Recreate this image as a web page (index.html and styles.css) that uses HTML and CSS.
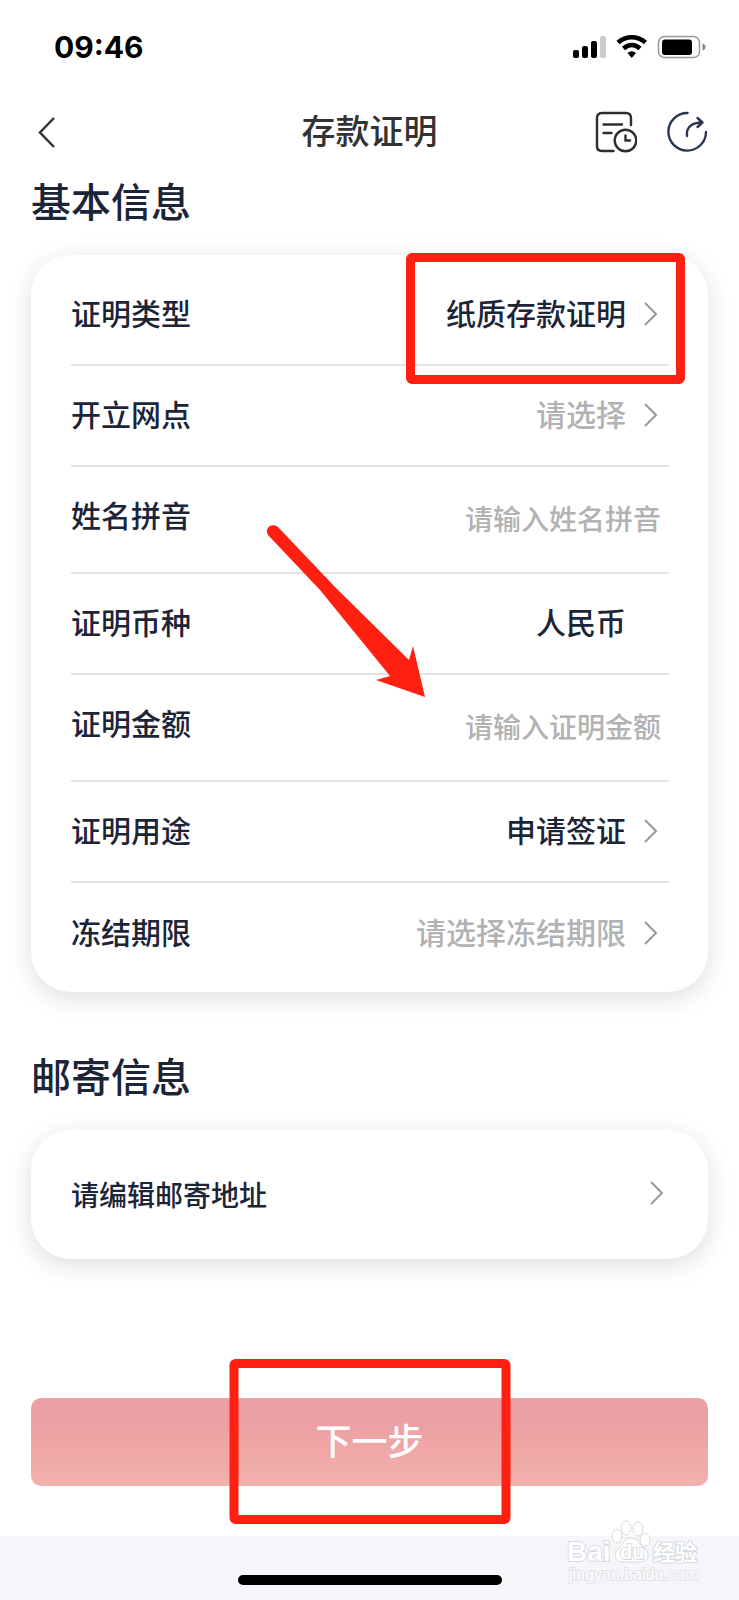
FILE: index.html
```html
<!DOCTYPE html>
<html lang="zh-CN">
<head>
  <meta charset="UTF-8" />
  <title>存款证明</title>
  <meta name="viewport" content="width=device-width, initial-scale=1" />
  <link rel="stylesheet" href="styles.css">
</head>
<body>
  <div class="status-bar">
    <span class="status-time">09:46</span>
    <svg class="status-icons" width="134" height="26" viewBox="0 0 134 26" aria-hidden="true">
      <rect x="1" y="16" width="6" height="8" rx="2"></rect>
      <rect x="10" y="12" width="6" height="12" rx="2"></rect>
      <rect x="19" y="7" width="6" height="17" rx="2"></rect>
      <rect x="28" y="2" width="6" height="22" rx="2" fill="#ccc"></rect>
      <path d="M46 8.500C54 1.500 65.500 1.500 73.500 8.500M51.500 14.500C56.500 10 63 10 68 14.500" fill="none" stroke="#000" stroke-width="4.600"></path>
      <path d="M55.500 19Q59.750 15.500 64 19L59.750 24Z"></path>
      <rect x="86.500" y="2.500" width="41" height="21" rx="6" fill="none" stroke="#999" stroke-width="1.500"></rect>
      <rect x="90" y="5.500" width="30" height="15.500" rx="3"></rect>
      <path d="M130.500 9.500Q133.500 10.500 133.500 13T130.500 16.500Z" fill="#888"></path>
    </svg>
  </div>

  <header class="nav">
    <button class="icon-btn back-btn" type="button" aria-label="返回">
      <svg width="20" height="32" viewBox="0 0 20 32"><path d="M17 2L3 16.500L17 31" fill="none" stroke="#333" stroke-width="2.500"></path></svg>
    </button>
    <h1 class="nav-title">存款证明</h1>
    <div class="nav-actions">
      <button class="icon-btn" type="button" aria-label="申请记录">
        <svg width="42" height="42" viewBox="0 0 42 42" fill="none" stroke="#2b2d33" stroke-width="2.400" stroke-linecap="round">
          <path d="M36 14V7Q36 2 31 2H7Q2 2 2 7V35Q2 40 7 40H18.500M8.500 13.500H27M8.500 22H16.500"></path>
          <circle cx="30.500" cy="29.500" r="10.800"></circle>
          <path d="M30.500 24.500V29.500H35"></path>
        </svg>
      </button>
      <button class="icon-btn" type="button" aria-label="分享">
        <svg width="42" height="42" viewBox="0 0 42 42" fill="none" stroke="#2b3654" stroke-width="2.400" stroke-linecap="round" stroke-linejoin="round">
          <path d="M21.500 2A18.800 18.800 0 1 0 40 21"></path>
          <path d="M21 25C20 16 26 11.500 36 11.500M31.500 7L36.500 11.500L31.500 16"></path>
        </svg>
      </button>
    </div>
  </header>

  <main class="content">
    <h2 class="section-title">基本信息</h2>
    <div class="card form-card">
      <div class="row">
        <label for="type">证明类型</label>
        <select id="type"><option>纸质存款证明</option></select>
        <svg class="chevron" viewBox="0 0 14 24"><path d="M1 1L12 12L1 23"></path></svg>
      </div>
      <div class="row">
        <label for="branch">开立网点</label>
        <select id="branch" class="empty"><option>请选择</option></select>
        <svg class="chevron" viewBox="0 0 14 24"><path d="M1 1L12 12L1 23"></path></svg>
      </div>
      <div class="row row-input">
        <label for="pinyin">姓名拼音</label>
        <input id="pinyin" type="text" placeholder="请输入姓名拼音">
      </div>
      <div class="row">
        <label for="currency">证明币种</label>
        <output id="currency">人民币</output>
      </div>
      <div class="row row-input">
        <label for="amount">证明金额</label>
        <input id="amount" type="text" inputmode="decimal" placeholder="请输入证明金额">
      </div>
      <div class="row">
        <label for="usage">证明用途</label>
        <select id="usage"><option>申请签证</option></select>
        <svg class="chevron" viewBox="0 0 14 24"><path d="M1 1L12 12L1 23"></path></svg>
      </div>
      <div class="row">
        <label for="period">冻结期限</label>
        <select id="period" class="empty"><option>请选择冻结期限</option></select>
        <svg class="chevron" viewBox="0 0 14 24"><path d="M1 1L12 12L1 23"></path></svg>
      </div>
      <div class="mark mark-type"></div>
      <svg class="arrow" width="162" height="176" viewBox="0 0 162 176" aria-hidden="true">
        <path d="M2 12C-2 6 5 -1 12 4L69 64L143 137L147 123L159 174L110 157L124 153L54 67Z"></path>
      </svg>
    </div>

    <h2 class="section-title">邮寄信息</h2>
    <a class="card address-card" href="#address">
      <span>请编辑邮寄地址</span>
      <svg class="chevron" viewBox="0 0 14 24"><path d="M1 1L12 12L1 23"></path></svg>
    </a>

    <div class="submit">
      <button class="submit-btn" type="button">下一步</button>
      <div class="mark mark-submit"></div>
    </div>
  </main>

  <footer class="home-area">
    <div class="home-bar"></div>
    <svg class="watermark" width="140" height="66" viewBox="0 0 140 66" role="img" aria-label="Bai du 经验">
      <g>
        <ellipse cx="50" cy="16" rx="5" ry="6.500"></ellipse>
        <ellipse cx="59" cy="8" rx="5" ry="7"></ellipse>
        <ellipse cx="71" cy="9" rx="5" ry="7"></ellipse>
        <ellipse cx="78" cy="20" rx="5" ry="6.500"></ellipse>
        <path d="M64 18C57 18 57 24 52 28C46 32 47 42 56 42H73C83 42 83 32 77 28C72 24 71 18 64 18Z"></path>
      </g>
      <text class="wm-logo" x="0" y="41">Bai</text>
      <text class="wm-du" x="53" y="39">du</text>
      <text class="wm-cn" x="86" y="40">经验</text>
      <text class="wm-url" x="2" y="60">jingyan.baidu.com</text>
    </svg>
  </footer>
</body>
</html>
```
FILE: styles.css
```css
* { box-sizing: border-box; }
body {
  margin: 0;
  min-height: 100vh;
  display: flex;
  flex-direction: column;
  font-family: "Noto Sans CJK SC", sans-serif;
  font-weight: 500;
  color: #1c2438;
  background: #fff;
}

button, input, select {
  font: inherit;
  color: inherit;
  border: 0;
  padding: 0;
  background: none;
}

/* 状态栏 */
.status-bar {
  height: 94px;
  padding: 0 33px 0 54px;
  display: flex;
  align-items: center;
  justify-content: space-between;
}
.status-time {
  font-family: Inter, sans-serif;
  font-size: 30px;
  font-weight: 700;
  color: #000;
}

/* 导航 */
.nav {
  height: 76px;
  padding: 0 31px;
  display: grid;
  grid-template-columns: 1fr auto 1fr;
  align-items: center;
}
.icon-btn {
  display: flex;
}
.back-btn {
  padding-left: 6px;
}
.nav-title {
  margin: 0;
  padding-bottom: 6px;
  font-size: 34px;
  font-weight: 500;
  color: #333;
}
.nav-actions {
  display: flex;
  justify-content: flex-end;
  gap: 29px;
}

.content {
  flex: 1;
  padding: 0 31px 50px;
}
.section-title {
  margin: 0 0 25px;
  font-size: 40px;
  line-height: 60px;
  font-weight: 500;
}

.card {
  position: relative;
  border-radius: 40px;
  background: #fff;
  box-shadow: 0 6px 24px rgba(28, 36, 60, 0.15);
}
.form-card {
  margin-bottom: 53px;
  padding: 10px 39px 8px 40px;
}
.row {
  height: 101px;
  display: flex;
  align-items: center;
  font-size: 30px;
  border-bottom: 2px solid #e2e3e5;
}
.row:nth-child(7) {
  border-bottom: 0;
}
.row label {
  padding-bottom: 6px;
  white-space: nowrap;
}
.row select {
  flex: 1;
  min-width: 0;
  padding-bottom: 6px;
  appearance: none;
  text-align-last: right;
}
.row output {
  flex: 1;
  padding: 0 43px 6px 0;
  text-align: right;
}
.row-input {
  height: 107px;
}
.row-input label {
  padding-bottom: 12px;
}
.row-input input {
  flex: 1;
  min-width: 0;
  padding: 0 8px 4px 0;
  font-size: 28px;
  text-align: right;
}
.row .empty,
.row input::placeholder {
  color: #b2b2b2;
}
.chevron {
  flex: none;
  width: 14px;
  height: 24px;
  margin: 0 11px 2px 18px;
  fill: none;
  stroke: #999;
  stroke-width: 2;
}

.address-card {
  height: 129px;
  padding: 0 33px 2px 40px;
  display: flex;
  align-items: center;
  justify-content: space-between;
  font-size: 28px;
  color: inherit;
  text-decoration: none;
}

.submit {
  position: relative;
  margin-top: 139px;
}
.submit-btn {
  width: 100%;
  height: 88px;
  padding-bottom: 6px;
  border-radius: 10px;
  font-size: 36px;
  color: #fff;
  background: linear-gradient(#eda0a3 30%, #f2b0ad);
}

/* 红色标注 */
.mark {
  position: absolute;
  border: 9px solid #ff2012;
  border-radius: 6px;
  pointer-events: none;
}
.mark-type {
  top: -2px;
  right: 23px;
  width: 279px;
  height: 131px;
}
.mark-submit {
  top: -39px;
  left: 50%;
  width: 281px;
  height: 165px;
  transform: translateX(-50%);
}
.arrow {
  position: absolute;
  top: 268px;
  left: 235px;
  fill: #ff2012;
  pointer-events: none;
}

/* 底部 */
.home-area {
  position: relative;
  height: 64px;
  padding-top: 39px;
  background: #f5f6fa;
}
.home-bar {
  width: 264px;
  height: 10px;
  margin: 0 auto;
  border-radius: 5px;
  background: #000;
}
.watermark {
  position: absolute;
  right: 32px;
  bottom: 14px;
  fill: #fff;
  stroke: #d9dadf;
  stroke-width: 1;
}
.watermark text {
  font-family: "Liberation Sans", "Noto Sans CJK SC", sans-serif;
  font-weight: 700;
  paint-order: stroke;
  stroke-width: 2;
}
.wm-logo { font-size: 28px; }
.wm-du { font-size: 20px; }
.wm-cn { font-size: 22px; }
.watermark .wm-url {
  font-size: 16px;
  font-weight: 400;
  stroke: #e2e3e8;
}
```
